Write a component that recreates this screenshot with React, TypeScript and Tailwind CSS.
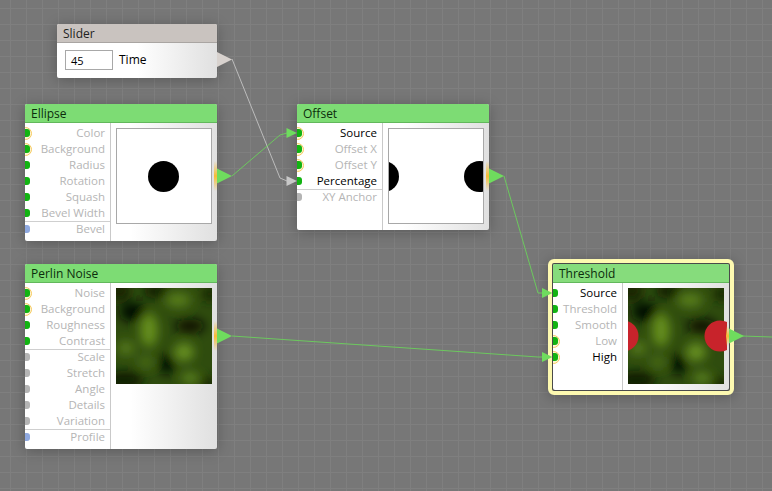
import React from "react";

type Pin = { label: string; kind?: "green" | "gray" | "blue"; ring?: boolean; on?: boolean; sep?: boolean };

const cloud = (id: string, red: boolean) => (
  <svg width="96" height="96" viewBox="0 0 96 96" className="block overflow-visible">
    <defs>
      <filter id={id} x="-30%" y="-30%" width="160%" height="160%">
        <feGaussianBlur stdDeviation="5.5" />
      </filter>
      <clipPath id={id + "c"}>
        <rect width="96" height="96" />
      </clipPath>
    </defs>
    <g clipPath={`url(#${id}c)`}>
      <rect width="96" height="96" fill="#2f4c0e" />
      <g filter={`url(#${id})`}>
        <ellipse cx="17" cy="24" rx="14" ry="10" fill="#060e02" />
        <ellipse cx="3" cy="3" rx="12" ry="10" fill="#142406" />
        <ellipse cx="40" cy="3" rx="13" ry="7" fill="#101f05" />
        <ellipse cx="74" cy="38" rx="15" ry="7" fill="#081103" />
        <ellipse cx="51" cy="76" rx="8" ry="11" fill="#060e02" />
        <ellipse cx="8" cy="92" rx="20" ry="9" fill="#0e1b05" />
        <ellipse cx="94" cy="6" rx="8" ry="8" fill="#162805" />
        <ellipse cx="92" cy="96" rx="10" ry="6" fill="#122105" />
        <ellipse cx="33" cy="42" rx="9" ry="17" fill="#66901f" />
        <ellipse cx="68" cy="64" rx="10" ry="9" fill="#699322" />
        <ellipse cx="62" cy="12" rx="13" ry="7" fill="#5a801c" />
        <ellipse cx="10" cy="60" rx="9" ry="7" fill="#567a1b" />
        <ellipse cx="74" cy="90" rx="9" ry="5" fill="#648c20" />
        <ellipse cx="30" cy="74" rx="9" ry="6" fill="#4a6c16" />
      </g>
    </g>
    {red && (
      <>
        <clipPath id={id + "r"}>
          <rect x="0" y="0" width="99" height="96" />
        </clipPath>
        <g clipPath={`url(#${id}r)`}>
          <circle cx="-5" cy="48" r="15.5" fill="#c8232b" />
          <circle cx="92" cy="48" r="15.5" fill="#c8232b" />
        </g>
      </>
    )}
  </svg>
);

function Pins({ pins, widthClass }: { pins: Pin[]; widthClass: string }) {
  return (
    <div className={`flex flex-col border-r border-[#c9c9c9] pt-[2px] shrink-0 ${widthClass}`}>
      {pins.map((p) => (
        <div
          key={p.label}
          className={`relative overflow-hidden h-4 leading-[16px] text-right pr-[5px] text-[11.5px] ${p.on ? "text-black" : "text-[#b5b5b5]"}`}
        >
          {p.sep && <span className="absolute inset-x-0 top-0 h-px bg-[#cfcfcf]" />}
          {p.ring && (
            <span className="absolute -left-[6px] top-[1.5px] w-[13px] h-[13px] rounded-full border-[1.5px] border-[#f6c95e] bg-[#fff6d6]" />
          )}
          <span
            className={`absolute left-0 top-[4px] w-[5px] h-[8px] rounded-r-[3px] ${
              p.kind === "gray" ? "bg-[#b4b4b4]" : p.kind === "blue" ? "bg-[#8fa9e0]" : "bg-[#12b312]"
            }`}
          />
          {p.label}
        </div>
      ))}
    </div>
  );
}

function Node({
  title, box, pins, left, children, titleBg = "bg-[#7ddc74]", mark = "h-[30px] top-[57px]",
  shadow = "shadow-[0_2px_14px_rgba(0,0,0,0.25)]",
}: {
  title: string; box: string; pins: Pin[]; left: string; children: React.ReactNode; titleBg?: string; mark?: string; shadow?: string;
}) {
  return (
    <div
      className={`absolute flex flex-col rounded-[2px] bg-gradient-to-r from-white from-55% to-[#e0e0e0] ${shadow} ${box}`}
    >
      <div className={`h-[19px] leading-[20px] pl-[6px] text-[12px] text-[#0c2c0c] border-b border-[#62b85c] rounded-t-[2px] shrink-0 ${titleBg}`}>
        {title}
      </div>
      <div className="flex flex-1 min-h-0">
        <Pins pins={pins} widthClass={left} />
        <div className="pl-[5px] pt-[5px]">{children}</div>
      </div>
      <span className={`absolute right-0 w-[3px] bg-gradient-to-b from-transparent via-[#f6bd35] to-transparent ${mark}`} />
    </div>
  );
}

const Out = ({ x, y, c }: { x: number; y: number; c: string }) => (
  <polygon points={`${x},${y - 7.5} ${x + 15},${y} ${x},${y + 7.5}`} fill={c} />
);
const In = ({ x, y, c }: { x: number; y: number; c: string }) => (
  <polygon points={`${x},${y - 5} ${x + 10.5},${y} ${x},${y + 5}`} fill={c} />
);

export default function App() {
  return (
    <div className="relative w-[772px] h-[491px] overflow-hidden bg-[#777777] bg-[linear-gradient(#7f7f7f_1px,transparent_1px),linear-gradient(90deg,#7f7f7f_1px,transparent_1px)] bg-[size:16px_16px] bg-[position:10px_8px] font-['Open_Sans','Noto_Sans',sans-serif]">
      {/* Slider */}
      <div className="absolute left-[57px] top-[24px] w-[160px] h-[54px] rounded-[2px] shadow-[0_2px_14px_rgba(0,0,0,0.25)] bg-gradient-to-r from-white from-50% to-[#e0e0e0]">
        <div className="h-[19px] leading-[20px] pl-[6px] text-[12px] text-[#222] bg-[#c9c3bf] border-b border-[#a9a5a2] rounded-t-[2px]">
          Slider
        </div>
        <div className="flex items-center pl-[8px] pt-[7px] gap-[6px] text-[12px] text-black">
          <div className="w-[48px] h-[20px] border border-[#a8a8a8] bg-white leading-[20px] pl-[5px] text-[11px]">45</div>
          <span className="-mt-[1px]">Time</span>
        </div>
      </div>

      <Node
        title="Ellipse" box="left-[25px] top-[104px] w-[192px] h-[137px]" left="w-[86px]"
        pins={[
          { label: "Color", ring: true },
          { label: "Background", ring: true },
          { label: "Radius" },
          { label: "Rotation" },
          { label: "Squash" },
          { label: "Bevel Width" },
          { label: "Bevel", kind: "blue", sep: true },
        ]}
      >
        <div className="relative w-[96px] h-[96px] bg-white border border-[#a8a8a8]">
          <span className="absolute left-[31px] top-[32px] w-[31px] h-[31px] rounded-full bg-black" />
        </div>
      </Node>

      <Node
        title="Offset" box="left-[297px] top-[104px] w-[192px] h-[126px]" left="w-[86px]"
        pins={[
          { label: "Source", ring: true, on: true },
          { label: "Offset X", ring: true },
          { label: "Offset Y", ring: true },
          { label: "Percentage", on: true },
          { label: "XY Anchor", kind: "gray", sep: true },
        ]}
      >
        <div className="relative w-[96px] h-[96px] bg-white border border-[#a8a8a8] overflow-hidden">
          <span className="absolute -left-[21px] top-[32px] w-[31px] h-[31px] rounded-full bg-black" />
          <span className="absolute left-[75px] top-[32px] w-[31px] h-[31px] rounded-full bg-black" />
        </div>
      </Node>

      <Node
        title="Perlin Noise" box="left-[25px] top-[264px] w-[192px] h-[185px]" left="w-[86px]"
        pins={[
          { label: "Noise", ring: true },
          { label: "Background", ring: true },
          { label: "Roughness" },
          { label: "Contrast" },
          { label: "Scale", kind: "gray", sep: true },
          { label: "Stretch", kind: "gray" },
          { label: "Angle", kind: "gray" },
          { label: "Details", kind: "gray" },
          { label: "Variation", kind: "gray" },
          { label: "Profile", kind: "blue", sep: true },
        ]}
      >
        {cloud("p1", false)}
      </Node>

      {/* Threshold highlight */}
      <div className="absolute left-[548px] top-[259px] w-[186px] h-[136px] rounded-[6px] border-[4px] border-[#fdf9b0] bg-[#4a4a4a] shadow-[0_2px_14px_rgba(0,0,0,0.25)]" />
      <Node
        title="Threshold" box="left-[553px] top-[264px] w-[176px] h-[126px]" left="w-[70px]"
        titleBg="bg-[#86dc7c]" mark="h-[20px] top-[62px]" shadow="shadow-none"
        pins={[
          { label: "Source", on: true },
          { label: "Threshold" },
          { label: "Smooth" },
          { label: "Low", ring: true },
          { label: "High", ring: true, on: true },
        ]}
      >
        {cloud("p2", true)}
      </Node>

      {/* Wires */}
      <svg className="absolute inset-0 pointer-events-none" width="772" height="491" fill="none">
        <polyline points="232,59 280,178 287,181" stroke="#bcbcbc" strokeWidth="1" />
        <polyline points="232,176 280,135 287,133" stroke="#6cc95e" strokeWidth="1" />
        <polyline points="504,176 538,293 542,293" stroke="#6cc95e" strokeWidth="1" />
        <polyline points="232,336 538,357 542,357" stroke="#6cc95e" strokeWidth="1" />
        <polyline points="742,336 772,337" stroke="#6cc95e" strokeWidth="1" />
        <Out x={217} y={59.5} c="#d8d2ce" />
        <Out x={217} y={176} c="#6fdc5e" />
        <Out x={489} y={176} c="#6fdc5e" />
        <Out x={217} y={336} c="#6fdc5e" />
        <Out x={729} y={336} c="#6fdc5e" />
        <In x={286.5} y={133} c="#6fdc5e" />
        <In x={286.5} y={181} c="#c8c8c8" />
        <In x={542} y={293} c="#6fdc5e" />
        <In x={542} y={357} c="#6fdc5e" />
      </svg>
    </div>
  );
}
